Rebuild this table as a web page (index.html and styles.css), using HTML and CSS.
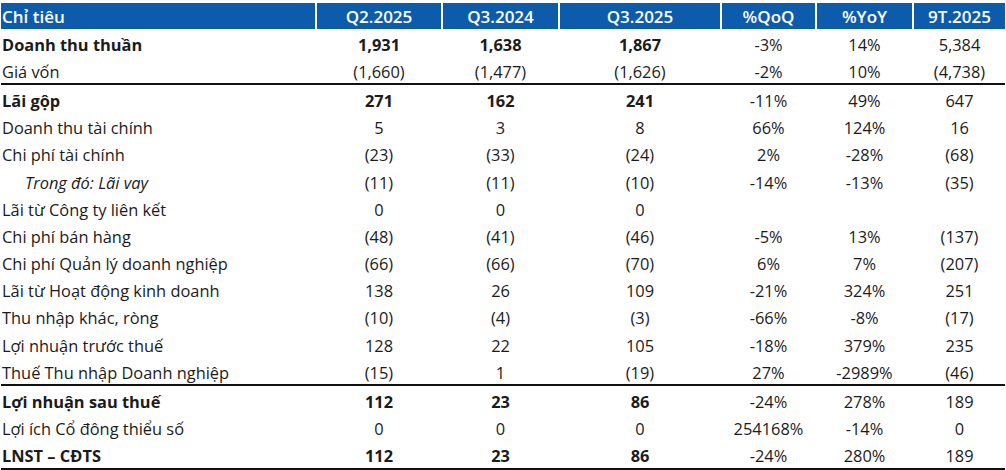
FILE: index.html
```html
<!DOCTYPE html>
<html lang="vi">
<head>
<meta charset="utf-8">
<link rel="stylesheet" href="styles.css">
</head>
<body>
<div class="table">
  <div class="row head">
    <div class="c label">Chỉ tiêu</div>
    <div class="c">Q2.2025</div>
    <div class="c">Q3.2024</div>
    <div class="c">Q3.2025</div>
    <div class="c">%QoQ</div>
    <div class="c">%YoY</div>
    <div class="c">9T.2025</div>
  </div>
  <div class="row bold">
    <div class="c label">Doanh thu thuần</div>
    <div class="c">1,931</div><div class="c">1,638</div><div class="c">1,867</div>
    <div class="c n">-3%</div><div class="c n">14%</div><div class="c n">5,384</div>
  </div>
  <div class="row rule">
    <div class="c label">Giá vốn</div>
    <div class="c">(1,660)</div><div class="c">(1,477)</div><div class="c">(1,626)</div>
    <div class="c">-2%</div><div class="c">10%</div><div class="c">(4,738)</div>
  </div>
  <div class="row bold">
    <div class="c label">Lãi gộp</div>
    <div class="c">271</div><div class="c">162</div><div class="c">241</div>
    <div class="c n">-11%</div><div class="c n">49%</div><div class="c n">647</div>
  </div>
  <div class="row">
    <div class="c label">Doanh thu tài chính</div>
    <div class="c">5</div><div class="c">3</div><div class="c">8</div>
    <div class="c">66%</div><div class="c">124%</div><div class="c">16</div>
  </div>
  <div class="row">
    <div class="c label">Chi phí tài chính</div>
    <div class="c">(23)</div><div class="c">(33)</div><div class="c">(24)</div>
    <div class="c">2%</div><div class="c">-28%</div><div class="c">(68)</div>
  </div>
  <div class="row">
    <div class="c label sub">Trong đó: Lãi vay</div>
    <div class="c">(11)</div><div class="c">(11)</div><div class="c">(10)</div>
    <div class="c">-14%</div><div class="c">-13%</div><div class="c">(35)</div>
  </div>
  <div class="row">
    <div class="c label">Lãi từ Công ty liên kết</div>
    <div class="c">0</div><div class="c">0</div><div class="c">0</div>
    <div class="c"></div><div class="c"></div><div class="c"></div>
  </div>
  <div class="row">
    <div class="c label">Chi phí bán hàng</div>
    <div class="c">(48)</div><div class="c">(41)</div><div class="c">(46)</div>
    <div class="c">-5%</div><div class="c">13%</div><div class="c">(137)</div>
  </div>
  <div class="row">
    <div class="c label">Chi phí Quản lý doanh nghiệp</div>
    <div class="c">(66)</div><div class="c">(66)</div><div class="c">(70)</div>
    <div class="c">6%</div><div class="c">7%</div><div class="c">(207)</div>
  </div>
  <div class="row">
    <div class="c label">Lãi từ Hoạt động kinh doanh</div>
    <div class="c">138</div><div class="c">26</div><div class="c">109</div>
    <div class="c">-21%</div><div class="c">324%</div><div class="c">251</div>
  </div>
  <div class="row">
    <div class="c label">Thu nhập khác, ròng</div>
    <div class="c">(10)</div><div class="c">(4)</div><div class="c">(3)</div>
    <div class="c">-66%</div><div class="c">-8%</div><div class="c">(17)</div>
  </div>
  <div class="row">
    <div class="c label">Lợi nhuận trước thuế</div>
    <div class="c">128</div><div class="c">22</div><div class="c">105</div>
    <div class="c">-18%</div><div class="c">379%</div><div class="c">235</div>
  </div>
  <div class="row rule">
    <div class="c label">Thuế Thu nhập Doanh nghiệp</div>
    <div class="c">(15)</div><div class="c">1</div><div class="c">(19)</div>
    <div class="c">27%</div><div class="c">-2989%</div><div class="c">(46)</div>
  </div>
  <div class="row bold">
    <div class="c label">Lợi nhuận sau thuế</div>
    <div class="c">112</div><div class="c">23</div><div class="c">86</div>
    <div class="c n">-24%</div><div class="c n">278%</div><div class="c n">189</div>
  </div>
  <div class="row">
    <div class="c label">Lợi ích Cổ đông thiểu số</div>
    <div class="c">0</div><div class="c">0</div><div class="c">0</div>
    <div class="c">254168%</div><div class="c">-14%</div><div class="c">0</div>
  </div>
  <div class="row bold rule">
    <div class="c label">LNST – CĐTS</div>
    <div class="c">112</div><div class="c">23</div><div class="c">86</div>
    <div class="c n">-24%</div><div class="c n">280%</div><div class="c n">189</div>
  </div>
</div>
</body>
</html>
```

FILE: styles.css
```css
html, body {
  margin: 0;
  padding: 0;
  background: #ffffff;
}
body {
  padding: 3px 1px 0 1px;
  font-family: "Open Sans", "Noto Sans", sans-serif;
  font-size: 16.4px;
  color: #1b1b1b;
}
.table {
  width: 1004px;
}
.row {
  display: grid;
  grid-template-columns: 314px 124px 115px 160px 93px 95px 91px;
  column-gap: 2px;
  height: 27.2px;
  align-items: center;
}
.row .c {
  padding-top: 3px;
}
.row.head {
  height: 26px;
  align-items: stretch;
}
.head .c {
  background: #0d5cab;
  color: #ffffff;
  font-weight: 600;
  font-size: 17px;
  padding-top: 1px;
  display: flex;
  align-items: center;
  justify-content: center;
}
.head .c.label {
  justify-content: flex-start;
  padding-left: 1px;
}
.c {
  text-align: center;
  white-space: nowrap;
}
.c.label {
  text-align: left;
  padding-left: 1px;
}
.c.sub {
  font-style: italic;
  padding-left: 24px;
}
.bold .c {
  font-weight: 700;
}
.bold .c.n {
  font-weight: 400;
}
.rule {
  border-bottom: 2px solid #111111;
}
```
